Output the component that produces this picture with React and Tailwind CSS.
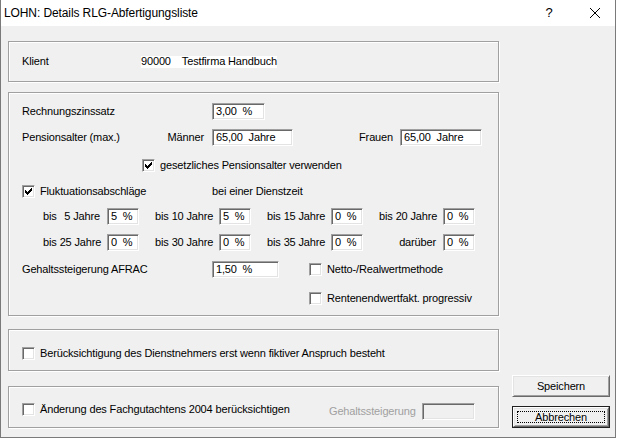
import React from "react";

const sunken =
  "border border-t-[#a0a0a0] border-l-[#a0a0a0] border-r-white border-b-white shadow-[inset_1px_1px_0_#696969,inset_-1px_-1px_0_#e3e3e3]";

const Field = ({ value = "", className = "", disabled = false }) => (
  <div
    className={`${sunken} h-[17px] pl-[3px] flex items-center whitespace-pre leading-none shrink-0 ${
      disabled ? "bg-[#f0f0f0]" : "bg-white"
    } ${className}`}
  >
    {value}
  </div>
);

const checkCols = [3, 4, 5, 4, 3, 2, 1];

const Check = ({ checked = false }) => (
  <div className={`${sunken} w-[13px] h-[13px] bg-white shrink-0 relative`}>
    {checked && (
      <svg width="9" height="9" viewBox="0 0 9 9" className="absolute left-px top-px" shapeRendering="crispEdges">
        {checkCols.map((y, i) => (
          <rect key={i} x={1 + i} y={y} width="1" height="3" fill="#000" />
        ))}
      </svg>
    )}
  </div>
);

const CheckLabel = ({ checked, children, className = "" }) => (
  <div className={`flex items-center h-[13px] ${className}`}>
    <Check checked={checked} />
    <span className="ml-[5px] whitespace-nowrap">{children}</span>
  </div>
);

const Group = ({ className = "", children }) => (
  <div className={`border border-[#a0a0a0] shadow-[inset_1px_1px_0_#fff,1px_1px_0_#fff] ${className}`}>
    {children}
  </div>
);

const Cell = ({ left, right, value }) => (
  <div className="flex items-center">
    <div className="w-[64px] shrink-0 flex justify-between gap-[3px] pr-[7px] whitespace-nowrap">
      <span>{left}</span>
      <span>{right}</span>
    </div>
    <Field className="w-[32px]" value={value} />
  </div>
);

const Button = ({ children, isDefault = false }) => (
  <div className={`w-[98px] h-[22px] ${isDefault ? "border border-[#202020]" : ""}`}>
    <div className="w-full h-full bg-[#f0f0f0] border border-t-white border-l-white border-r-[#696969] border-b-[#696969] shadow-[inset_1px_1px_0_#e3e3e3,inset_-1px_-1px_0_#a0a0a0] flex items-center justify-center p-[3px]">
      <div
        className={`w-full h-full flex items-center justify-center ${
          isDefault ? "border border-dotted border-black" : ""
        }`}
      >
        {children}
      </div>
    </div>
  </div>
);

export default function App() {
  return (
    <div className="w-[619px] h-[439px] bg-white font-['Liberation_Sans',Arial,sans-serif] text-black">
      <div className="w-[616px] h-[438px] border-l border-r border-b border-[#7a7a7a] flex flex-col">
        {/* title bar */}
        <div className="h-[26px] bg-white flex items-center shrink-0">
          <div className="flex-1 pl-[3px] text-[12px] tracking-[-0.1px]">LOHN: Details RLG-Abfertigungsliste</div>
          <div className="w-[52px] text-center text-[13px]">?</div>
          <div className="w-[40px] flex justify-center">
            <svg width="10" height="10" viewBox="0 0 10 10">
              <path d="M0 0 L10 10 M10 0 L0 10" stroke="#000" strokeWidth="1" />
            </svg>
          </div>
        </div>

        {/* body */}
        <div className="flex-1 bg-[#f0f0f0] flex text-[11px] tracking-[-0.15px]">
          <div className="pl-[7px] flex flex-col">
            <Group className="w-[491px] h-[41px] mt-[15px] flex items-center pl-[13px]">
              <span className="w-[119px]">Klient</span>
              <div className="bg-white h-[12px] w-[136px] flex items-center whitespace-nowrap">
                <span>90000</span>
                <span className="ml-[11px]">Testfirma Handbuch</span>
              </div>
            </Group>

            <Group className="w-[491px] h-[224px] mt-[10px] pl-[13px] flex flex-col">
              <div className="flex items-center h-[17px] mt-[10px]">
                <span className="w-[190px]">Rechnungszinssatz</span>
                <Field className="w-[53px]" value={"3,00  %"} />
              </div>

              <div className="flex items-center h-[17px] mt-[9px]">
                <div className="w-[190px] flex justify-between pr-[8px]">
                  <span>Pensionsalter (max.)</span>
                  <span>Männer</span>
                </div>
                <Field className="w-[81px]" value={"65,00  Jahre"} />
                <span className="w-[107px] text-right pr-[7px]">Frauen</span>
                <Field className="w-[82px]" value={"65,00  Jahre"} />
              </div>

              <CheckLabel checked className="mt-[13px] ml-[120px]">
                gesetzliches Pensionsalter verwenden
              </CheckLabel>

              <div className="flex items-center h-[13px] mt-[13px]">
                <CheckLabel checked className="w-[190px]">
                  Fluktuationsabschläge
                </CheckLabel>
                <span>bei einer Dienstzeit</span>
              </div>

              <div className="flex items-center h-[17px] mt-[10px] ml-[21px] gap-[16px]">
                <Cell left="bis" right="5 Jahre" value={"5  %"} />
                <Cell left="bis" right="10 Jahre" value={"5  %"} />
                <Cell left="bis" right="15 Jahre" value={"0  %"} />
                <Cell left="bis" right="20 Jahre" value={"0  %"} />
              </div>

              <div className="flex items-center h-[17px] mt-[9px] ml-[21px] gap-[16px]">
                <Cell left="bis" right="25 Jahre" value={"0  %"} />
                <Cell left="bis" right="30 Jahre" value={"0  %"} />
                <Cell left="bis" right="35 Jahre" value={"0  %"} />
                <Cell left="" right="darüber" value={"0  %"} />
              </div>

              <div className="flex items-center h-[17px] mt-[10px]">
                <span className="w-[190px]">Gehaltssteigerung AFRAC</span>
                <Field className="w-[67px]" value={"1,50  %"} />
                <CheckLabel className="ml-[30px]">Netto-/Realwertmethode</CheckLabel>
              </div>

              <CheckLabel className="mt-[14px] ml-[287px]">Rentenendwertfakt. progressiv</CheckLabel>
            </Group>

            <Group className="w-[491px] h-[42px] mt-[13px] pl-[13px] pt-[17px]">
              <CheckLabel>Berücksichtigung des Dienstnehmers erst wenn fiktiver Anspruch besteht</CheckLabel>
            </Group>

            <Group className="w-[491px] h-[42px] mt-[15px] pl-[13px] pt-[16px] flex items-start">
              <CheckLabel className="w-[307px]">Änderung des Fachgutachtens 2004 berücksichtigen</CheckLabel>
              <span className="w-[93px] h-[17px] flex items-center text-[#a0a0a0]">Gehaltssteigerung</span>
              <Field className="w-[53px]" disabled />
            </Group>
          </div>

          <div className="ml-[13px] pt-[349px] flex flex-col">
            <Button>Speichern</Button>
            <div className="mt-[9px]">
              <Button isDefault>Abbrechen</Button>
            </div>
          </div>
        </div>
      </div>
    </div>
  );
}
